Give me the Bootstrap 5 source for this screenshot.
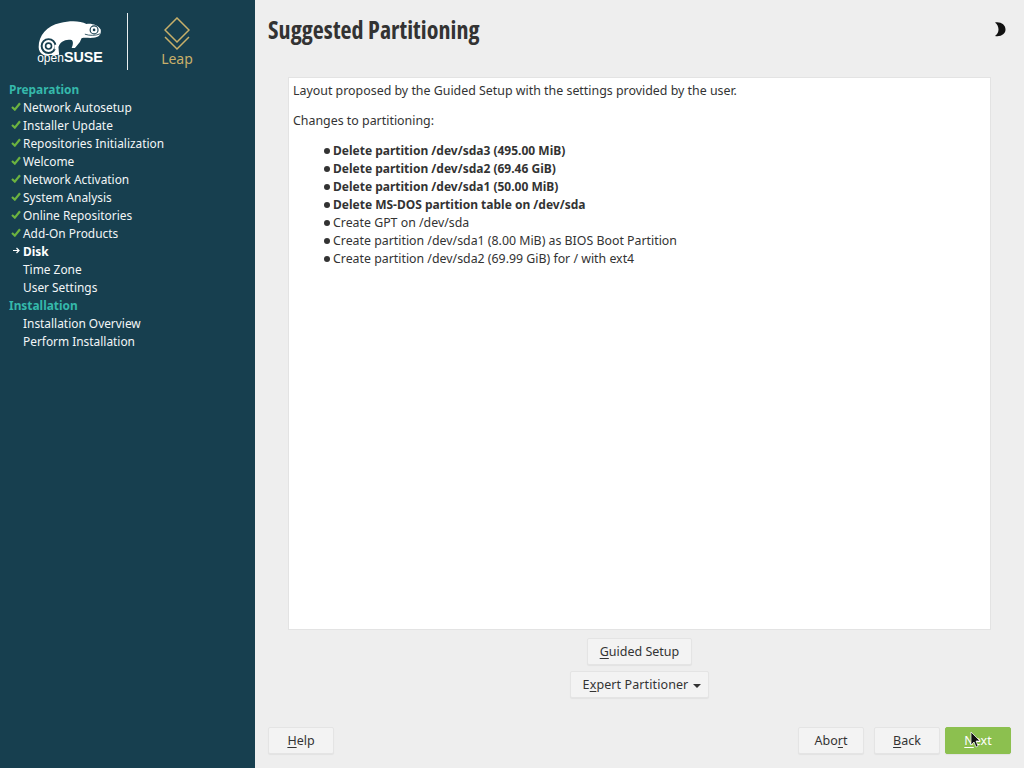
<!DOCTYPE html>
<html lang="en">
<head>
<meta charset="utf-8">
<title>Suggested Partitioning</title>
<link href="https://cdn.jsdelivr.net/npm/bootstrap@5.3.0/dist/css/bootstrap.min.css" rel="stylesheet">
<style>
html,body{height:100%;overflow:hidden}
body{background:#eeeeee;font-family:"Noto Sans","Open Sans",sans-serif;font-size:12.4px;line-height:18px;color:#333}
.shell{height:768px;width:1024px}
.side{width:255px;background:#173f4f;color:#f3f6f7;flex:none;font-size:11.9px}
.brand{height:80px;padding:13px 0 0 37px}
.logo-box{width:66px;margin-top:6px}
.logo-box svg{display:block}
.brand-rule{width:1px;height:57px;background:#e8eef0;margin:0 21px 0 24px;flex:none}
.suse-word{font-family:"Liberation Sans",sans-serif;font-size:12px;line-height:10px;color:#fff;margin-top:-3px;white-space:nowrap;text-align:center}
.suse-word b{font-size:14.3px}
.leap-box{width:56px}
.leap-box svg{margin-top:4px}
.leap-word{font-size:14px;line-height:16px;color:#c8b06a;text-align:center}
.step-head{color:#35b9ab;font-weight:700;padding-left:9px}
.step{padding-left:23px;position:relative;white-space:nowrap}
.step-mark{position:absolute;left:11px;top:4px;width:10px;height:9px}
.step-now{font-weight:700;color:#fff}
.work{min-width:0}
.head-row{height:77px;padding:15px 18px 0 13px}
.page-title{font-family:"Open Sans",sans-serif;font-stretch:condensed;font-size:24px;line-height:30px;font-weight:700;letter-spacing:.07px;color:#333;margin:0}
.panel-wrap{padding:0 33px}
.panel-box{height:553px;background:#fff;border:1px solid #e3e3e3;padding:4px;color:#333}
.panel-box p{margin:0 0 12px}
.change-list{margin:0;padding-left:40px;list-style:none;font-size:12.35px}
.change-list li{position:relative;white-space:nowrap}
.change-list li.fw-bold{font-size:12px}
.change-list li::before{content:"";position:absolute;left:-9px;top:6px;width:6px;height:6px;border-radius:50%;background:#333}
.act{background:#f3f3f3;border:1px solid #e4e4e4;border-radius:2px;color:#333;font-size:12.5px;line-height:18px;padding:4px 12px 3px;box-shadow:0 1px 1px rgba(0,0,0,.05)}
.act:hover{background:#f3f3f3;color:#333;border-color:#e4e4e4}
.act u{text-underline-offset:2px}
.act-wide{width:66px;padding-left:0;padding-right:0}
.act-go{background:#8cc04f;border-color:#8cc04f;color:#fff;position:relative}
.act-go:hover{background:#8cc04f;border-color:#8cc04f;color:#fff}
.act.dropdown-toggle{padding-right:7px;letter-spacing:.1px}
.act.dropdown-toggle::after{border-top-width:4.5px;border-left-width:4.5px;border-right-width:4.5px;margin-left:5px;vertical-align:.12em}
.center-btns{padding-top:8px;gap:6px}
.foot-row{padding:29px 13px 14px 13px}
.gap-ten{margin-left:10px}
.gap-five{margin-left:5px}
.pointer{position:absolute;left:24px;top:3px;width:11px;height:17px}
.moon{width:12px;height:15px;display:block;margin-top:7px}
</style>
</head>
<body>
<div class="shell d-flex">
  <aside class="side d-flex flex-column">
    <div class="brand d-flex align-items-start">
      <div class="logo-box">
        <svg width="66" height="36.300" viewBox="55 40 200 110" aria-hidden="true">
          <path fill="#fff" d="M60 125C60 90 85 60 125 52C155 45 185 45 205 55C220 52 240 58 248 72C250 85 245 95 225 97C210 98 200 95 190 98L185 110L170 128L160 128C165 115 165 108 160 104C140 100 125 110 120 125L122 148L90 152C70 152 60 140 60 125z"/>
          <circle cx="90" cy="122" r="21" fill="none" stroke="#173f4f" stroke-width="6"/>
          <circle cx="90" cy="122" r="9" fill="none" stroke="#173f4f" stroke-width="5"/>
          <path fill="#fff" d="M108 118h10v14h-10z"/>
          <circle cx="228" cy="73" r="12" fill="none" stroke="#173f4f" stroke-width="3.500"/>
          <circle cx="228" cy="73" r="4" fill="#173f4f"/>
          <path fill="none" stroke="#173f4f" stroke-width="2.500" d="M200 86c15 5 32 5 46-1"/>
        </svg>
        <div class="suse-word">open<b>SUSE</b></div>
      </div>
      <div class="brand-rule"></div>
      <div class="leap-box">
        <svg class="d-block mx-auto" width="26" height="34" viewBox="0 0 26 34" aria-hidden="true">
          <path fill="none" stroke="#c8b06a" stroke-width="1.500" d="M13 1 25 13 13 25 1 13z"/>
          <path fill="none" stroke="#c8b06a" stroke-width="1.500" d="M1 20 13 32 25 20"/>
        </svg>
        <div class="leap-word">Leap</div>
      </div>
    </div>
    <div class="step-head">Preparation</div>
    <div class="step"><svg class="step-mark" viewBox="0 0 10 9"><path fill="none" stroke="#6cb33f" stroke-width="2.200" d="M1 5l2.800 2.600L9 1.200"/></svg>Network Autosetup</div>
    <div class="step"><svg class="step-mark" viewBox="0 0 10 9"><path fill="none" stroke="#6cb33f" stroke-width="2.200" d="M1 5l2.800 2.600L9 1.200"/></svg>Installer Update</div>
    <div class="step"><svg class="step-mark" viewBox="0 0 10 9"><path fill="none" stroke="#6cb33f" stroke-width="2.200" d="M1 5l2.800 2.600L9 1.200"/></svg>Repositories Initialization</div>
    <div class="step"><svg class="step-mark" viewBox="0 0 10 9"><path fill="none" stroke="#6cb33f" stroke-width="2.200" d="M1 5l2.800 2.600L9 1.200"/></svg>Welcome</div>
    <div class="step"><svg class="step-mark" viewBox="0 0 10 9"><path fill="none" stroke="#6cb33f" stroke-width="2.200" d="M1 5l2.800 2.600L9 1.200"/></svg>Network Activation</div>
    <div class="step"><svg class="step-mark" viewBox="0 0 10 9"><path fill="none" stroke="#6cb33f" stroke-width="2.200" d="M1 5l2.800 2.600L9 1.200"/></svg>System Analysis</div>
    <div class="step"><svg class="step-mark" viewBox="0 0 10 9"><path fill="none" stroke="#6cb33f" stroke-width="2.200" d="M1 5l2.800 2.600L9 1.200"/></svg>Online Repositories</div>
    <div class="step"><svg class="step-mark" viewBox="0 0 10 9"><path fill="none" stroke="#6cb33f" stroke-width="2.200" d="M1 5l2.800 2.600L9 1.200"/></svg>Add-On Products</div>
    <div class="step step-now"><svg class="step-mark" viewBox="0 0 10 9"><path fill="none" stroke="#fff" stroke-width="1.200" d="M2 4.500h6M5.500 2l2.500 2.500L5.500 7"/></svg>Disk</div>
    <div class="step">Time Zone</div>
    <div class="step">User Settings</div>
    <div class="step-head">Installation</div>
    <div class="step">Installation Overview</div>
    <div class="step">Perform Installation</div>
  </aside>
  <main class="work flex-grow-1 d-flex flex-column">
    <div class="head-row d-flex justify-content-between align-items-start">
      <h1 class="page-title">Suggested Partitioning</h1>
      <svg class="moon" viewBox="0 0 12 15" aria-hidden="true"><path fill="#111" d="M1 .5C7-.5 11.500 3 11.500 7.500C11.500 12 7 15 1 14C3.500 12 4.500 10 4.500 7.500C4.500 5 3.500 2.500 1 .5z"/></svg>
    </div>
    <div class="panel-wrap">
      <div class="panel-box">
        <p>Layout proposed by the Guided Setup with the settings provided by the user.</p>
        <p>Changes to partitioning:</p>
        <ul class="change-list">
          <li class="fw-bold">Delete partition /dev/sda3 (495.00 MiB)</li>
          <li class="fw-bold">Delete partition /dev/sda2 (69.46 GiB)</li>
          <li class="fw-bold">Delete partition /dev/sda1 (50.00 MiB)</li>
          <li class="fw-bold">Delete MS-DOS partition table on /dev/sda</li>
          <li>Create GPT on /dev/sda</li>
          <li>Create partition /dev/sda1 (8.00 MiB) as BIOS Boot Partition</li>
          <li>Create partition /dev/sda2 (69.99 GiB) for / with ext4</li>
        </ul>
      </div>
    </div>
    <div class="center-btns d-flex flex-column align-items-center">
      <button type="button" class="btn act"><u>G</u>uided Setup</button>
      <button type="button" class="btn act dropdown-toggle">E<u>x</u>pert Partitioner</button>
    </div>
    <div class="foot-row d-flex">
      <button type="button" class="btn act act-wide"><u>H</u>elp</button>
      <div class="ms-auto d-flex">
        <button type="button" class="btn act act-wide">Abo<u>r</u>t</button>
        <button type="button" class="btn act act-wide gap-ten"><u>B</u>ack</button>
        <button type="button" class="btn act act-wide act-go gap-five"><u>N</u>ext
          <svg class="pointer" viewBox="0 0 11 17" aria-hidden="true"><path fill="#111" stroke="#fff" stroke-width=".7" d="M1 1v13l3-3 2 5 2-1-2-5h4z"/></svg>
        </button>
      </div>
    </div>
  </main>
</div>
<script src="https://cdn.jsdelivr.net/npm/bootstrap@5.3.0/dist/js/bootstrap.bundle.min.js"></script>
</body>
</html>
